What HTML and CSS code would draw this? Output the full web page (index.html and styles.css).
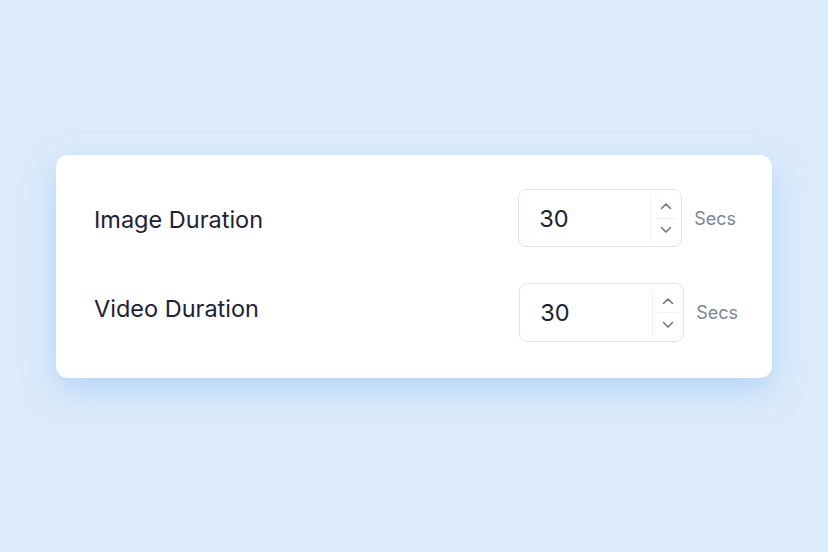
FILE: index.html
```html
<!DOCTYPE html>
<html>
<head>
<meta charset="utf-8">
<link rel="stylesheet" href="styles.css">
</head>
<body>
<div class="card">
  <div class="row row1">
    <div class="label">Image Duration</div>
    <div class="control">
      <div class="numbox">
        <div class="value">30</div>
        <div class="spin">
          <div class="btn"><svg width="12" height="8" viewBox="0 0 12 8"><path d="M1.5 6.5 L6 2 L10.5 6.5" fill="none" stroke="#6b7488" stroke-width="1.5" stroke-linecap="round" stroke-linejoin="round"/></svg></div>
          <div class="sep"></div>
          <div class="btn"><svg width="12" height="8" viewBox="0 0 12 8"><path d="M1.5 1.5 L6 6 L10.5 1.5" fill="none" stroke="#6b7488" stroke-width="1.5" stroke-linecap="round" stroke-linejoin="round"/></svg></div>
        </div>
      </div>
      <div class="unit">Secs</div>
    </div>
  </div>
  <div class="row row2">
    <div class="label">Video Duration</div>
    <div class="control">
      <div class="numbox">
        <div class="value">30</div>
        <div class="spin">
          <div class="btn"><svg width="12" height="8" viewBox="0 0 12 8"><path d="M1.5 6.5 L6 2 L10.5 6.5" fill="none" stroke="#6b7488" stroke-width="1.5" stroke-linecap="round" stroke-linejoin="round"/></svg></div>
          <div class="sep"></div>
          <div class="btn"><svg width="12" height="8" viewBox="0 0 12 8"><path d="M1.5 1.5 L6 6 L10.5 1.5" fill="none" stroke="#6b7488" stroke-width="1.5" stroke-linecap="round" stroke-linejoin="round"/></svg></div>
        </div>
      </div>
      <div class="unit">Secs</div>
    </div>
  </div>
</div>
</body>
</html>
```

FILE: styles.css
```css
html, body {
  margin: 0;
  padding: 0;
}
body {
  width: 828px;
  height: 552px;
  background: #dcebfb;
  font-family: Inter, "Noto Sans", sans-serif;
  padding-top: 155px;
  box-sizing: border-box;
  overflow: hidden;
}
.card {
  width: 716px;
  margin-left: 56px;
  box-sizing: border-box;
  background: #ffffff;
  border-radius: 12px;
  padding: 34px 36px 36px 38px;
  box-shadow: 0 12px 30px rgba(150, 195, 245, 0.55);
  display: flex;
  flex-direction: column;
  gap: 36px;
}
.row {
  display: flex;
  align-items: center;
  justify-content: space-between;
}
.label {
  font-size: 23.5px;
  color: #1d2235;
}
.row1 .label {
  margin-top: 3px;
}
.row2 .label {
  margin-bottom: 8px;
}
.control {
  display: flex;
  align-items: center;
  gap: 12px;
}
.row2 .control {
  margin-right: -2px;
}
.numbox {
  width: 164px;
  height: 58px;
  box-sizing: border-box;
  border: 1px solid #dfe3ea;
  border-radius: 8px;
  display: flex;
  align-items: stretch;
}
.row2 .numbox {
  height: 59px;
  width: 165px;
}
.value {
  flex: 1;
  display: flex;
  align-items: center;
  padding-left: 20px;
  font-size: 23.5px;
  color: #1d2235;
}
.spin {
  width: 30px;
  margin: 5px 0;
  border-left: 1px solid #eef0f4;
  display: flex;
  flex-direction: column;
  align-items: center;
}
.btn {
  flex: 1;
  display: flex;
  align-items: center;
  justify-content: center;
  width: 100%;
}
.sep {
  width: 20px;
  height: 1px;
  background: #eef0f4;
}
.unit {
  font-size: 18px;
  color: #7b8498;
}
```
